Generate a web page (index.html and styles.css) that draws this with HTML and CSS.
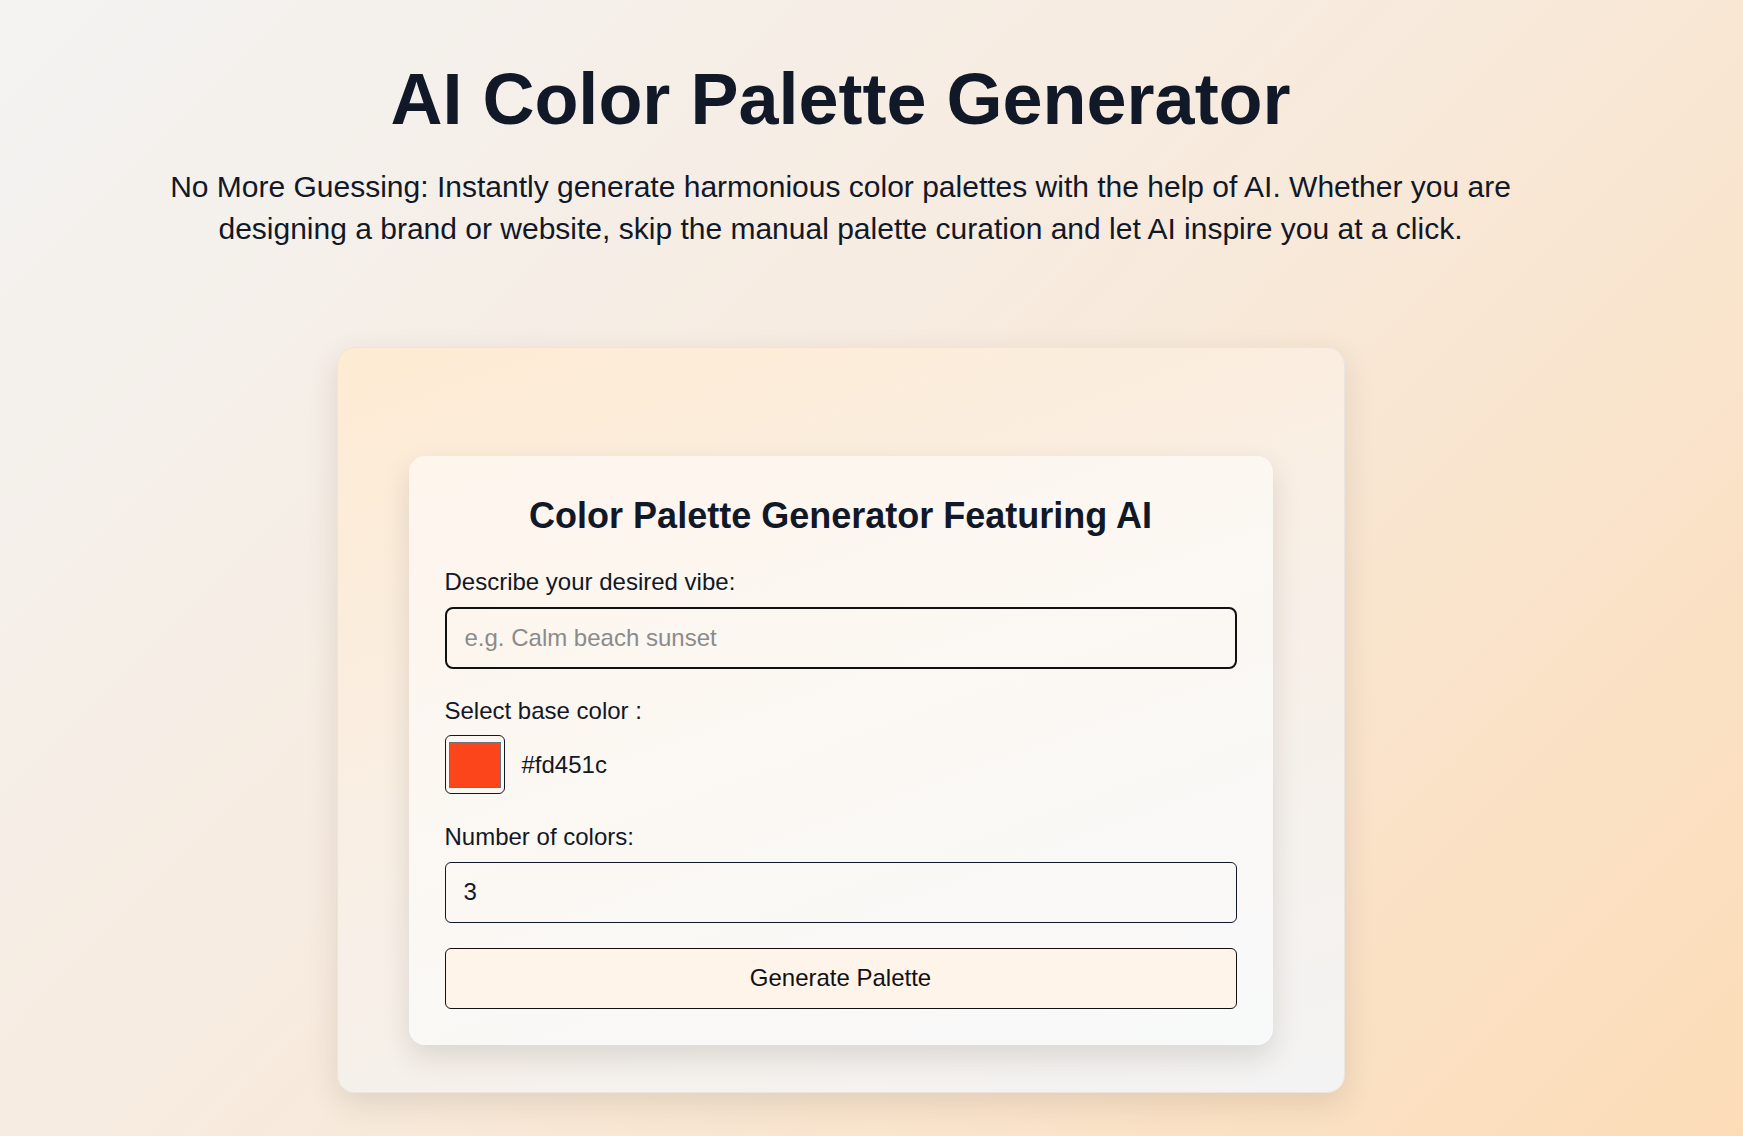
FILE: index.html
```html
<!DOCTYPE html>
<html lang="en">
<head>
<meta charset="utf-8">
<title>AI Color Palette Generator</title>
<link rel="stylesheet" href="styles.css">
</head>
<body>
<main class="page">
  <h1 class="title">AI Color Palette Generator</h1>
  <p class="intro">No More Guessing: Instantly generate harmonious color palettes with the help of AI. Whether you are designing a brand or website, skip the manual palette curation and let AI inspire you at a click.</p>
  <section class="outer">
    <form class="card">
      <h2 class="card-title">Color Palette Generator Featuring AI</h2>
      <div class="group">
        <label class="label" for="vibe">Describe your desired vibe:</label>
        <input class="field field-focus" id="vibe" type="text" placeholder="e.g. Calm beach sunset">
      </div>
      <div class="group group-color">
        <label class="label" for="base">Select base color :</label>
        <div class="color-row">
          <input class="color" id="base" type="color" value="#fd451c">
          <span class="hex">#fd451c</span>
        </div>
      </div>
      <div class="group group-last">
        <label class="label" for="count">Number of colors:</label>
        <input class="field" id="count" type="number" value="3" min="1" max="10">
      </div>
      <button class="btn" type="button">Generate Palette</button>
    </form>
  </section>
</main>
</body>
</html>
```
FILE: styles.css
```css
html {
  min-height: 100%;
}
body {
  margin: 0;
  min-height: 100vh;
  background: linear-gradient(135deg, #f3f3f2 0%, #f7ebdf 45%, #fcdcb7 100%);
  font-family: "Liberation Sans", Arial, sans-serif;
  color: #111827;
}
.page {
  display: flex;
  flex-direction: column;
  align-items: center;
  padding: 58px 62px 44px 0;
}
.title {
  margin: 0;
  font-size: 72px;
  font-weight: 700;
  line-height: normal;
  color: #111827;
}
.intro {
  margin: 26px 0 0;
  max-width: 1400px;
  font-size: 30px;
  line-height: 42px;
  text-align: center;
  color: #111827;
}
.outer {
  margin-top: 97px;
  width: 1008px;
  box-sizing: border-box;
  padding: 108px 71px 47px;
  border: 1px solid #ebe5e1;
  border-radius: 18px;
  background: linear-gradient(160deg, #feebd3 0%, #f8efe6 50%, #f3f3f3 100%);
  box-shadow: 0 10px 30px rgba(60, 40, 20, 0.12);
}
.card {
  display: flex;
  flex-direction: column;
  padding: 39px 36px 36px;
  border-radius: 16px;
  background: linear-gradient(160deg, #fef5ec 0%, #fbf8f4 55%, #f8f9fa 100%);
  box-shadow: 0 12px 28px rgba(40, 30, 20, 0.13);
}
.card-title {
  margin: 0 0 31px;
  font-size: 36px;
  font-weight: 700;
  line-height: normal;
  text-align: center;
  color: #111827;
}
.group {
  display: flex;
  flex-direction: column;
  margin-bottom: 28px;
}
.group-color {
  margin-bottom: 29px;
}
.group-last {
  margin-bottom: 25px;
}
.label {
  margin-bottom: 10.5px;
  font-size: 24px;
  line-height: normal;
  color: #111827;
}
.field {
  box-sizing: border-box;
  height: 61px;
  padding: 0 18px;
  border: 1px solid #111827;
  border-radius: 6px;
  background: transparent;
  font-family: "Liberation Sans", Arial, sans-serif;
  font-size: 24px;
  color: #111827;
  outline: none;
}
.field-focus {
  height: 62px;
  border: 2px solid #111111;
  border-radius: 8px;
}
.field::placeholder {
  color: #8b8b8b;
}
.field::-webkit-inner-spin-button,
.field::-webkit-outer-spin-button {
  -webkit-appearance: none;
  margin: 0;
}
.color-row {
  display: flex;
  align-items: center;
  gap: 17px;
}
.color {
  -webkit-appearance: none;
  appearance: none;
  box-sizing: border-box;
  width: 60px;
  height: 59px;
  padding: 0;
  border: 1px solid #111827;
  border-radius: 6px;
  background: transparent;
  cursor: pointer;
}
.color::-webkit-color-swatch-wrapper {
  padding: 6px 3px 5px;
}
.color::-webkit-color-swatch {
  border: 1px solid #6b7280;
  border-radius: 0;
}
.hex {
  font-size: 24px;
  color: #111827;
}
.btn {
  box-sizing: border-box;
  height: 61px;
  border: 1px solid #111111;
  border-radius: 6px;
  background: #fff4ea;
  font-family: "Liberation Sans", Arial, sans-serif;
  font-size: 24px;
  color: #111111;
  cursor: pointer;
}
```
